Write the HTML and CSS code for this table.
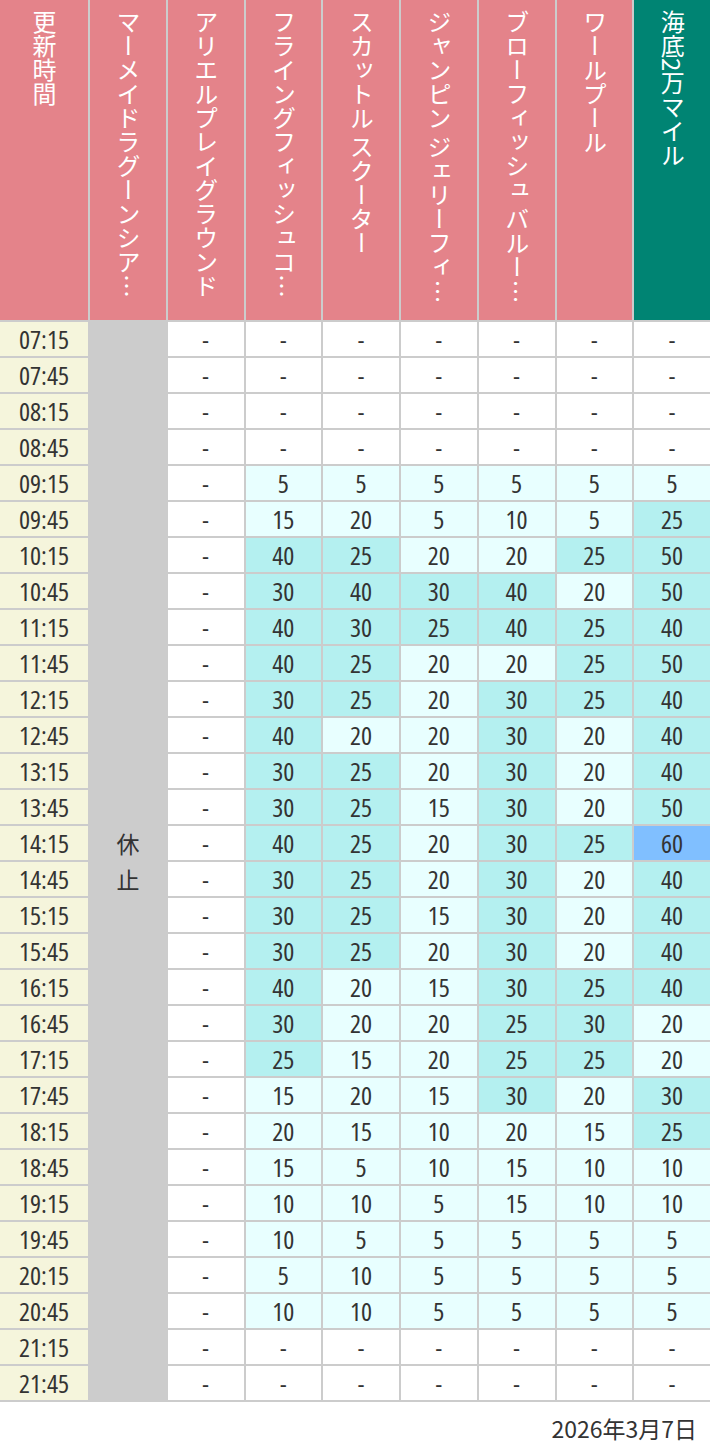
FILE: index.html
```html
<!DOCTYPE html>
<html lang="ja">
<head>
<meta charset="utf-8">
<title>待ち時間</title>
<link rel="stylesheet" href="styles.css">
</head>
<body>
<div class="table">
  <div class="th"><span class="vt">更新時間</span></div>
  <div class="th"><span class="vt">マーメイドラグーンシア…</span></div>
  <div class="th"><span class="vt">アリエルプレイグラウンド</span></div>
  <div class="th"><span class="vt">フライングフィッシュコ…</span></div>
  <div class="th"><span class="vt">スカットル スクーター</span></div>
  <div class="th"><span class="vt">ジャンピン ジェリーフィ…</span></div>
  <div class="th"><span class="vt">ブローフィッシュ バルー…</span></div>
  <div class="th"><span class="vt">ワールプール</span></div>
  <div class="th th-sel"><span class="vt">海底2万マイル</span></div>

  <div class="closed">休<br>止</div>

  <div class="c t">07:15</div><div class="c d">-</div><div class="c d">-</div><div class="c d">-</div><div class="c d">-</div><div class="c d">-</div><div class="c d">-</div><div class="c d">-</div>
  <div class="c t">07:45</div><div class="c d">-</div><div class="c d">-</div><div class="c d">-</div><div class="c d">-</div><div class="c d">-</div><div class="c d">-</div><div class="c d">-</div>
  <div class="c t">08:15</div><div class="c d">-</div><div class="c d">-</div><div class="c d">-</div><div class="c d">-</div><div class="c d">-</div><div class="c d">-</div><div class="c d">-</div>
  <div class="c t">08:45</div><div class="c d">-</div><div class="c d">-</div><div class="c d">-</div><div class="c d">-</div><div class="c d">-</div><div class="c d">-</div><div class="c d">-</div>
  <div class="c t">09:15</div><div class="c d">-</div><div class="c l">5</div><div class="c l">5</div><div class="c l">5</div><div class="c l">5</div><div class="c l">5</div><div class="c l">5</div>
  <div class="c t">09:45</div><div class="c d">-</div><div class="c l">15</div><div class="c l">20</div><div class="c l">5</div><div class="c l">10</div><div class="c l">5</div><div class="c m">25</div>
  <div class="c t">10:15</div><div class="c d">-</div><div class="c m">40</div><div class="c m">25</div><div class="c l">20</div><div class="c l">20</div><div class="c m">25</div><div class="c m">50</div>
  <div class="c t">10:45</div><div class="c d">-</div><div class="c m">30</div><div class="c m">40</div><div class="c m">30</div><div class="c m">40</div><div class="c l">20</div><div class="c m">50</div>
  <div class="c t">11:15</div><div class="c d">-</div><div class="c m">40</div><div class="c m">30</div><div class="c m">25</div><div class="c m">40</div><div class="c m">25</div><div class="c m">40</div>
  <div class="c t">11:45</div><div class="c d">-</div><div class="c m">40</div><div class="c m">25</div><div class="c l">20</div><div class="c l">20</div><div class="c m">25</div><div class="c m">50</div>
  <div class="c t">12:15</div><div class="c d">-</div><div class="c m">30</div><div class="c m">25</div><div class="c l">20</div><div class="c m">30</div><div class="c m">25</div><div class="c m">40</div>
  <div class="c t">12:45</div><div class="c d">-</div><div class="c m">40</div><div class="c l">20</div><div class="c l">20</div><div class="c m">30</div><div class="c l">20</div><div class="c m">40</div>
  <div class="c t">13:15</div><div class="c d">-</div><div class="c m">30</div><div class="c m">25</div><div class="c l">20</div><div class="c m">30</div><div class="c l">20</div><div class="c m">40</div>
  <div class="c t">13:45</div><div class="c d">-</div><div class="c m">30</div><div class="c m">25</div><div class="c l">15</div><div class="c m">30</div><div class="c l">20</div><div class="c m">50</div>
  <div class="c t">14:15</div><div class="c d">-</div><div class="c m">40</div><div class="c m">25</div><div class="c l">20</div><div class="c m">30</div><div class="c m">25</div><div class="c h">60</div>
  <div class="c t">14:45</div><div class="c d">-</div><div class="c m">30</div><div class="c m">25</div><div class="c l">20</div><div class="c m">30</div><div class="c l">20</div><div class="c m">40</div>
  <div class="c t">15:15</div><div class="c d">-</div><div class="c m">30</div><div class="c m">25</div><div class="c l">15</div><div class="c m">30</div><div class="c l">20</div><div class="c m">40</div>
  <div class="c t">15:45</div><div class="c d">-</div><div class="c m">30</div><div class="c m">25</div><div class="c l">20</div><div class="c m">30</div><div class="c l">20</div><div class="c m">40</div>
  <div class="c t">16:15</div><div class="c d">-</div><div class="c m">40</div><div class="c l">20</div><div class="c l">15</div><div class="c m">30</div><div class="c m">25</div><div class="c m">40</div>
  <div class="c t">16:45</div><div class="c d">-</div><div class="c m">30</div><div class="c l">20</div><div class="c l">20</div><div class="c m">25</div><div class="c m">30</div><div class="c l">20</div>
  <div class="c t">17:15</div><div class="c d">-</div><div class="c m">25</div><div class="c l">15</div><div class="c l">20</div><div class="c m">25</div><div class="c m">25</div><div class="c l">20</div>
  <div class="c t">17:45</div><div class="c d">-</div><div class="c l">15</div><div class="c l">20</div><div class="c l">15</div><div class="c m">30</div><div class="c l">20</div><div class="c m">30</div>
  <div class="c t">18:15</div><div class="c d">-</div><div class="c l">20</div><div class="c l">15</div><div class="c l">10</div><div class="c l">20</div><div class="c l">15</div><div class="c m">25</div>
  <div class="c t">18:45</div><div class="c d">-</div><div class="c l">15</div><div class="c l">5</div><div class="c l">10</div><div class="c l">15</div><div class="c l">10</div><div class="c l">10</div>
  <div class="c t">19:15</div><div class="c d">-</div><div class="c l">10</div><div class="c l">10</div><div class="c l">5</div><div class="c l">15</div><div class="c l">10</div><div class="c l">10</div>
  <div class="c t">19:45</div><div class="c d">-</div><div class="c l">10</div><div class="c l">5</div><div class="c l">5</div><div class="c l">5</div><div class="c l">5</div><div class="c l">5</div>
  <div class="c t">20:15</div><div class="c d">-</div><div class="c l">5</div><div class="c l">10</div><div class="c l">5</div><div class="c l">5</div><div class="c l">5</div><div class="c l">5</div>
  <div class="c t">20:45</div><div class="c d">-</div><div class="c l">10</div><div class="c l">10</div><div class="c l">5</div><div class="c l">5</div><div class="c l">5</div><div class="c l">5</div>
  <div class="c t">21:15</div><div class="c d">-</div><div class="c d">-</div><div class="c d">-</div><div class="c d">-</div><div class="c d">-</div><div class="c d">-</div><div class="c d">-</div>
  <div class="c t">21:45</div><div class="c d">-</div><div class="c d">-</div><div class="c d">-</div><div class="c d">-</div><div class="c d">-</div><div class="c d">-</div><div class="c d">-</div>
</div>
<div class="date">2026年3月7日</div>
</body>
</html>
```

FILE: styles.css
```css
html, body {
  margin: 0;
  padding: 0;
  background: #ffffff;
}

body {
  font-family: "Noto Sans CJK JP", "Noto Sans", sans-serif;
  color: #333333;
}

.table {
  display: grid;
  grid-template-columns: 88px repeat(8, 1fr);
  grid-template-rows: 320px repeat(30, 34px);
  gap: 2px;
  padding-bottom: 2px;
  background: #cccccc;
  width: 710px;
}

.th {
  background: #e4838a;
  color: #ffffff;
  display: flex;
  justify-content: center;
  align-items: flex-start;
  padding-top: 10px;
  overflow: hidden;
}

.th-sel {
  background: #008473;
}

.vt {
  writing-mode: vertical-rl;
  font-size: 24px;
  line-height: 1;
  white-space: nowrap;
}

.closed {
  grid-column: 2;
  grid-row: 2 / span 30;
  background: #cccccc;
  display: flex;
  align-items: center;
  justify-content: center;
  text-align: center;
  font-size: 23px;
  line-height: 36px;
  color: #333333;
}

.c {
  display: flex;
  align-items: center;
  justify-content: center;
  font-family: "Open Sans", "DejaVu Sans", sans-serif;
  font-stretch: 75%;
  font-weight: 500;
  font-size: 26px;
  color: #333333;
}

.t {
  background: #f5f5dc;
}

.d {
  background: #ffffff;
  font-size: 24px;
}

.l {
  background: #e8ffff;
}

.m {
  background: #b4f0f0;
}

.h {
  background: #80bfff;
}

.date {
  text-align: right;
  padding: 11px 13px 0 0;
  font-size: 23px;
  line-height: 30px;
  color: #333333;
}
```
